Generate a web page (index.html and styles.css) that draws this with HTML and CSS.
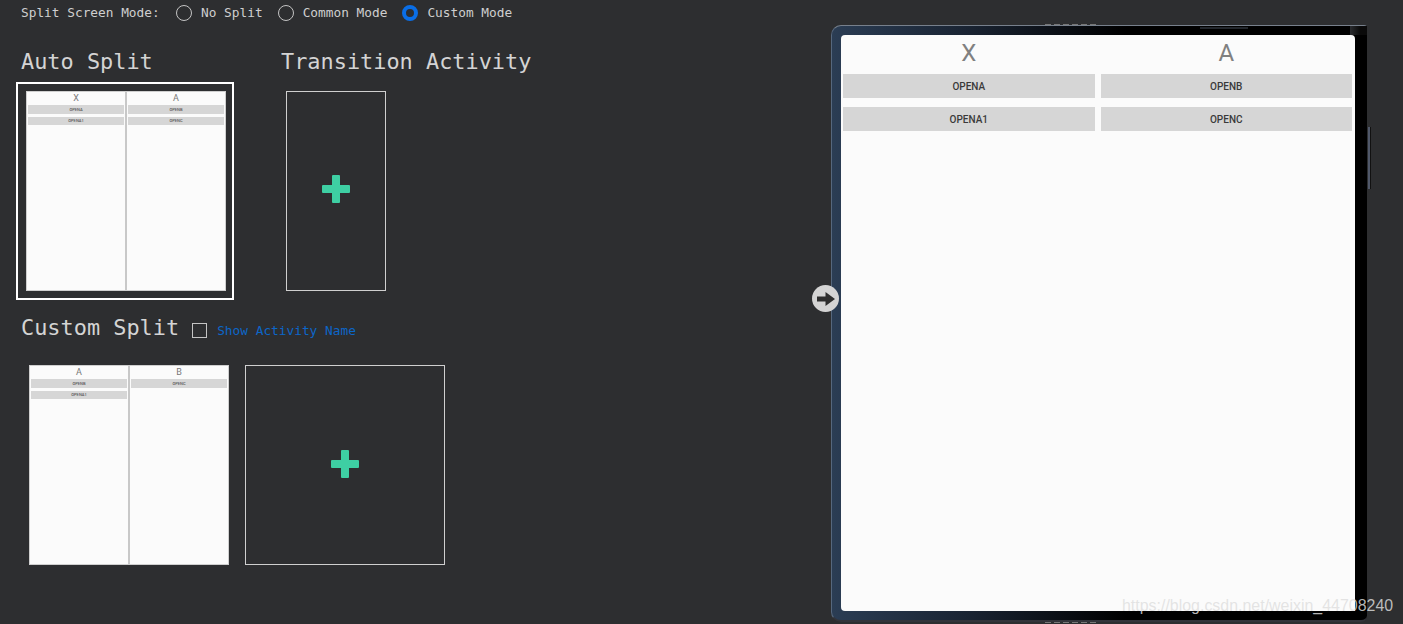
FILE: index.html
```html
<!DOCTYPE html>
<html lang="en">
<head>
<meta charset="utf-8">
<title>Split Screen</title>
<link rel="stylesheet" href="styles.css">
</head>
<body>
<main class="page">
  <section class="panel">
    <div class="modes">
      <span class="modes-label">Split Screen Mode:</span>
      <label class="mode"><span class="radio"></span>No Split</label>
      <label class="mode"><span class="radio"></span>Common Mode</label>
      <label class="mode"><span class="radio radio-on"></span>Custom Mode</label>
    </div>

    <div class="auto-row">
      <div class="auto-col">
        <h2 class="title">Auto Split</h2>
        <div class="selected">
          <div class="thumb">
            <div class="thumb-pane"><div class="thumb-head">X</div><div class="thumb-btn">OPENA</div><div class="thumb-btn thumb-btn-low">OPENA1</div></div>
            <div class="thumb-pane"><div class="thumb-head">A</div><div class="thumb-btn">OPENB</div><div class="thumb-btn thumb-btn-low">OPENC</div></div>
          </div>
        </div>
      </div>
      <div class="trans-col">
        <h2 class="title">Transition Activity</h2>
        <div class="add add-narrow">
          <svg class="plus" width="28" height="28" viewBox="0 0 28 28"><path d="M11 0h6a1 1 0 0 1 1 1v9h9a1 1 0 0 1 1 1v6a1 1 0 0 1-1 1h-9v9a1 1 0 0 1-1 1h-6a1 1 0 0 1-1-1v-9H1a1 1 0 0 1-1-1v-6a1 1 0 0 1 1-1h9V1a1 1 0 0 1 1-1z"/></svg>
        </div>
      </div>
    </div>

    <div class="custom-head">
      <h2 class="title">Custom Split</h2>
      <span class="check"></span>
      <span class="check-label">Show Activity Name</span>
    </div>

    <div class="custom-row">
      <div class="thumb">
        <div class="thumb-pane"><div class="thumb-head">A</div><div class="thumb-btn">OPENB</div><div class="thumb-btn thumb-btn-low">OPENA1</div></div>
        <div class="thumb-pane"><div class="thumb-head">B</div><div class="thumb-btn">OPENC</div></div>
      </div>
      <div class="add add-wide">
        <svg class="plus" width="28" height="28" viewBox="0 0 28 28"><path d="M11 0h6a1 1 0 0 1 1 1v9h9a1 1 0 0 1 1 1v6a1 1 0 0 1-1 1h-9v9a1 1 0 0 1-1 1h-6a1 1 0 0 1-1-1v-9H1a1 1 0 0 1-1-1v-6a1 1 0 0 1 1-1h9V1a1 1 0 0 1 1-1z"/></svg>
      </div>
    </div>
  </section>

  <section class="device">
    <span class="dash dash-top"></span>
    <span class="dash dash-bottom"></span>
    <span class="notch"></span>
    <span class="corner"></span>
    <span class="side-key"></span>
    <div class="screen">
      <div class="pane">
        <div class="pane-head">X</div>
        <div class="pane-btn">OPENA</div>
        <div class="pane-btn">OPENA1</div>
      </div>
      <div class="pane">
        <div class="pane-head">A</div>
        <div class="pane-btn">OPENB</div>
        <div class="pane-btn">OPENC</div>
      </div>
    </div>
    <span class="handle">
      <svg width="18" height="14" viewBox="0 0 18 14"><path d="M0 4.500h8.500V0L18 7l-9.500 7V9.500H0z"/></svg>
    </span>
  </section>
</main>
<div class="watermark">https://blog.csdn.net/weixin_44708240</div>
</body>
</html>
```
FILE: styles.css
```css
* { box-sizing: border-box; }
html, body { height: 100%; }
body {
  margin: 0;
  background: #2d2e30;
  color: #d6d6d6;
  font-family: "DejaVu Sans Mono", "Liberation Mono", monospace;
  overflow: hidden;
  position: relative;
}
.page { display: flex; align-items: flex-start; }
.panel { width: 831px; flex: none; }

.modes {
  display: flex;
  align-items: center;
  height: 25px;
  padding-left: 21px;
  font-size: 12.800px;
  color: #cfcfcf;
}
.modes-label { width: 155px; }
.mode { display: flex; align-items: center; gap: 9px; margin-right: 15px; }
.radio {
  width: 16px;
  height: 16px;
  border: 1px solid #c4c4c4;
  border-radius: 50%;
}
.radio-on { border: 4.500px solid #0a6ee6; background: #2d2e30; }

.title {
  margin: 0;
  height: 30px;
  line-height: 32px;
  font-size: 21.900px;
  font-weight: 400;
  color: #d4d4d4;
  white-space: nowrap;
}

.auto-row { display: flex; margin: 21px 0 0 16px; }
.auto-col { width: 218px; }
.auto-col .title { padding-left: 5px; margin-bottom: 6px; }
.selected {
  width: 218px;
  height: 218px;
  border: 2px solid #fff;
  padding: 7px 6px 7px 8px;
}
.trans-col { margin-left: 47px; }
.trans-col .title { margin-bottom: 15px; }

.thumb {
  width: 200px;
  height: 200px;
  display: flex;
  gap: 2px;
  background: #c8c8c8;
  border: 1px solid #cfcfcf;
  flex: none;
}
.thumb-pane {
  flex: 1;
  background: #fbfbfb;
  display: flex;
  flex-direction: column;
  gap: 3px;
  padding: 0 1px;
  color: #333;
}
.thumb-head {
  height: 10px;
  line-height: 13px;
  text-align: center;
  font-family: Roboto, "Liberation Sans", sans-serif;
  font-size: 9px;
  color: #777;
}
.thumb-btn {
  height: 9px;
  line-height: 9px;
  background: #d6d6d6;
  text-align: center;
  font-family: Roboto, "Liberation Sans", sans-serif;
  font-size: 4px;
  font-weight: 500;
  color: #555;
}
.thumb-btn-low { height: 8px; line-height: 8px; }

.add {
  height: 200px;
  border: 1px solid #cfcfcf;
  display: flex;
  align-items: center;
  justify-content: center;
}
.add-narrow { width: 100px; margin-left: 5px; }
.add-wide { width: 200px; }
.plus { fill: #3ecfa3; margin-bottom: 3px; }
.add-narrow .plus { margin-bottom: 5px; }

.custom-head {
  display: flex;
  align-items: center;
  height: 30px;
  margin: 12px 0 0 21px;
}
.check {
  width: 15px;
  height: 15px;
  margin: 6px 10px 0 13px;
  border: 1px solid #c4c4c4;
}
.check-label { font-size: 12.800px; color: #0c66c8; margin-top: 6px; }

.custom-row { display: flex; gap: 16px; margin: 23px 0 0 29px; }

.device {
  position: relative;
  width: 536px;
  height: 597px;
  margin-top: 25px;
  padding: 10px 12px 9px 10px;
  border-radius: 10px 3px 6px 10px;
  border-top: 1px solid #77808c;
  border-left: 1px solid #56677d;
  border-bottom: 2px solid #33343a;
  background: linear-gradient(90deg, #2b3d54 0, #1a2433 25%, #000 55%, #000 100%);
}
.screen {
  display: flex;
  gap: 6px;
  width: 514px;
  height: 576px;
  margin-top: -1px;
  margin-left: -1px;
  padding: 0 3px 0 2px;
  background: #fbfbfb;
  border-radius: 4px 4px 0 4px;
}
.pane { flex: 1; display: flex; flex-direction: column; gap: 9px; }
.pane-head {
  height: 39px;
  margin-bottom: -9px;
  padding-top: 3px;
  line-height: 30px;
  text-align: center;
  font-family: Roboto, "Liberation Sans", sans-serif;
  font-size: 24px;
  color: #808080;
}
.pane-btn {
  height: 24px;
  line-height: 25px;
  background: #d6d6d6;
  text-align: center;
  font-family: Roboto, "Liberation Sans", sans-serif;
  font-size: 10px;
  font-weight: 500;
  color: #3a3a3a;
}
.handle {
  position: absolute;
  left: -20px;
  top: 259px;
  width: 27px;
  height: 27px;
  border-radius: 50%;
  background: #d4d4d4;
  display: flex;
  align-items: center;
  justify-content: center;
  fill: #2e2e2e;
}
.dash {
  position: absolute;
  left: 213px;
  width: 52px;
  height: 1px;
  background: repeating-linear-gradient(90deg, #777 0 6px, transparent 6px 9px);
}
.dash-top { top: -2px; }
.dash-bottom { bottom: -3px; }
.notch {
  position: absolute;
  left: 368px;
  top: 1px;
  width: 48px;
  height: 2px;
  background: #23272d;
}
.corner {
  position: absolute;
  right: 0;
  top: 0;
  width: 17px;
  height: 9px;
  background: linear-gradient(90deg, #2a2c2f, #0a0a0a 60%);
}
.side-key {
  position: absolute;
  left: 536px;
  top: 101px;
  width: 3px;
  height: 62px;
  background: #50586a;
  border-right: 1px solid #111;
}
.watermark {
  position: absolute;
  left: 1122px;
  top: 597px;
  font-family: "Liberation Sans", sans-serif;
  font-size: 15.950px;
  line-height: 18px;
  color: rgba(222, 222, 222, 0.82);
  white-space: nowrap;
}
```
